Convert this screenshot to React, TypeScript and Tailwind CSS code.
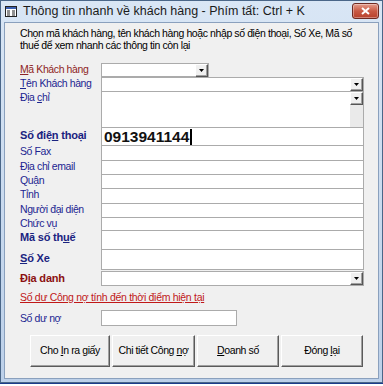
import React from "react";

const font = { fontFamily: '"Liberation Sans", Arial, sans-serif' };

const DropBtn: React.FC = () => (
  <div className="flex h-[13px] w-[13px] shrink-0 items-center justify-center border-t border-l border-white border-r border-b border-r-[#555] border-b-[#555] bg-[#f0f0f0] shadow-[inset_-1px_-1px_0_#a0a0a0]">
    <svg width="5" height="3" viewBox="0 0 5 3">
      <path d="M0 0h5L2.5 3z" fill="#000" />
    </svg>
  </div>
);

interface rowprops {
  label: React.ReactNode;
  labelClass: string;
  h: string;
  children?: React.ReactNode;
  fieldClass?: string;
}

const Row: React.FC<rowprops> = ({ label, labelClass, h, children, fieldClass }) => (
  <div className={`flex ${h}`}>
    <div className={`w-[81px] shrink-0 leading-[13px] ${labelClass}`}>{label}</div>
    <div className={`flex-1 bg-white border-x border-t border-[#ababab] ${fieldClass ?? ""}`}>{children}</div>
  </div>
);

const Btn: React.FC<{ w: string; children: React.ReactNode }> = ({ w, children }) => (
  <div
    className={`${w} flex h-[32px] items-center justify-center border-t border-l border-white border-r border-b border-r-[#5a5a5a] border-b-[#5a5a5a] bg-[#f0f0f0] text-[10.5px] tracking-[-0.4px] text-black shadow-[inset_-1px_-1px_0_#a0a0a0]`}
  >
    <span>{children}</span>
  </div>
);

export default function App() {
  const blue = "text-[10.5px] tracking-[-0.4px] text-[#1c2590]";
  const boldBlue = "text-[11px] font-bold tracking-[-0.2px] text-[#1a2380]";
  return (
    <div className="h-[386px] w-[383px] overflow-hidden bg-white" style={font}>
      <div className="flex h-[383px] flex-col border border-[#4a6688] bg-gradient-to-b from-[#d9e6f5] to-[#bcd0e9] px-[3px]">
        {/* title bar */}
        <div className="flex h-[21px] shrink-0 items-center">
          <svg width="12" height="11" viewBox="0 0 12 11" className="ml-[1px]">
            <rect x="0.5" y="0.5" width="11" height="10" fill="#fff" stroke="#222" />
            <rect x="1" y="1" width="10" height="2" fill="#3a5fb0" />
            <path d="M2 5h3M2 7h3M2 9h3M7 5h3M7 7h3M7 9h3" stroke="#222" strokeWidth="1" />
          </svg>
          <span className="ml-[6px] text-[12.5px] text-[#1b1b1b]">Thông tin nhanh về khách hàng - Phím tất: Ctrl + K</span>
          <div className="ml-auto mt-[-2px] flex h-[16px] w-[27px] items-center justify-center rounded-[3px] border border-[#6e2a22] bg-gradient-to-b from-[#e49c8c] via-[#c95a45] to-[#b8412c] shadow-[inset_0_0_0_1px_rgba(255,255,255,0.35)]">
            <svg width="9" height="8" viewBox="0 0 9 8">
              <path d="M1 1l7 6M8 1L1 7" stroke="#fff" strokeWidth="2" />
            </svg>
          </div>
        </div>
        {/* client area */}
        <div className="flex flex-1 flex-col border border-[#8aa0bd] bg-[#f0f0f0] pl-[15px] pr-[14px]">
          <p className="mt-[4px] text-[10.5px] leading-[12px] tracking-[-0.4px] text-black">
            Chọn mã khách hàng, tên khách hàng hoặc nhập số điện thoại, Số Xe, Mã số thuế để xem nhanh các thông tin còn lại
          </p>

          <div className="mt-[12px] flex h-[14px]">
            <div className="w-[81px] shrink-0 text-[10.5px] leading-[13px] tracking-[-0.4px] text-[#8e2424]">
              <span className="underline">M</span>ã Khách hàng
            </div>
            <div className="flex w-[108px] items-start border border-[#ababab] bg-white">
              <div className="flex-1" />
              <DropBtn />
            </div>
          </div>

          <Row h="h-[14px]" labelClass={blue} label={<><span className="underline">T</span>ên Khách hàng</>} fieldClass="flex justify-end">
            <DropBtn />
          </Row>
          <Row h="h-[36px]" labelClass={blue} label={<>Địa <span className="underline">c</span>hỉ</>} fieldClass="flex justify-end">
            <div className="flex w-[13px] flex-col bg-[#eaeaea]">
              <DropBtn />
            </div>
          </Row>
          <Row
            h="h-[18px]"
            labelClass={`${boldBlue} pt-[2px]`}
            label={<>Số điệ<span className="underline">n</span> thoại</>}
            fieldClass="flex items-center pl-[2px]"
          >
            <span className="text-[15.5px] font-bold leading-none text-[#111]">0913941144</span>
            <span className="ml-[1px] h-[16px] w-[2px] bg-black" />
          </Row>
          <Row h="h-[15px]" labelClass={blue} label="Số Fax" />
          <Row h="h-[14px]" labelClass={blue} label="Địa chỉ email" />
          <Row h="h-[14px]" labelClass={blue} label="Quận" />
          <Row h="h-[15px]" labelClass={blue} label="Tỉnh" />
          <Row h="h-[14px]" labelClass={blue} label="Người đại diện" />
          <Row h="h-[13px]" labelClass={blue} label="Chức vụ" />
          <Row h="h-[19px]" labelClass={`${boldBlue} pt-[1px]`} label={<>Mã số th<span className="underline">u</span>ế</>} />
          <div className="flex h-[21px]">
            <div className={`w-[81px] shrink-0 leading-[13px] pt-[3px] ${boldBlue}`}>
              <span className="underline">S</span>ố Xe
            </div>
            <div className="flex-1 border border-[#ababab] bg-white" />
          </div>

          <div className="mt-[1px] flex h-[15px]">
            <div className="w-[81px] shrink-0 pt-[1px] text-[11px] font-bold leading-[13px] tracking-[-0.2px] text-[#8b1010]">Địa danh</div>
            <div className="flex flex-1 justify-end border border-[#ababab] bg-white">
              <DropBtn />
            </div>
          </div>

          <div className="mt-[5px] text-[10.5px] leading-[13px] tracking-[-0.3px] text-[#c01818]">
            <span className="underline">Số dư Công nợ tính đến thời điểm hiện tại</span>
          </div>

          <div className="mt-[6px] flex h-[16px] items-center">
            <div className="w-[81px] shrink-0 text-[10.5px] leading-[13px] tracking-[-0.4px] text-[#1c2590]">Số dư nợ</div>
            <div className="h-[16px] w-[136px] border border-[#ababab] bg-white" />
          </div>

          <div className="mt-[9px] ml-[10px] flex gap-[2px]">
            <Btn w="w-[80px]">
              Cho <span className="underline">I</span>n ra giấy
            </Btn>
            <Btn w="w-[83px]">
              Chi tiết Công <span className="underline">n</span>ợ
            </Btn>
            <Btn w="w-[82px]">
              <span className="underline">D</span>oanh số
            </Btn>
            <Btn w="w-[82px]">
              Đóng <span className="underline">l</span>ại
            </Btn>
          </div>
        </div>
        <div className="h-[3px] shrink-0" />
      </div>
      <div className="h-[1px] bg-[#1b3c8c]" />
    </div>
  );
}
